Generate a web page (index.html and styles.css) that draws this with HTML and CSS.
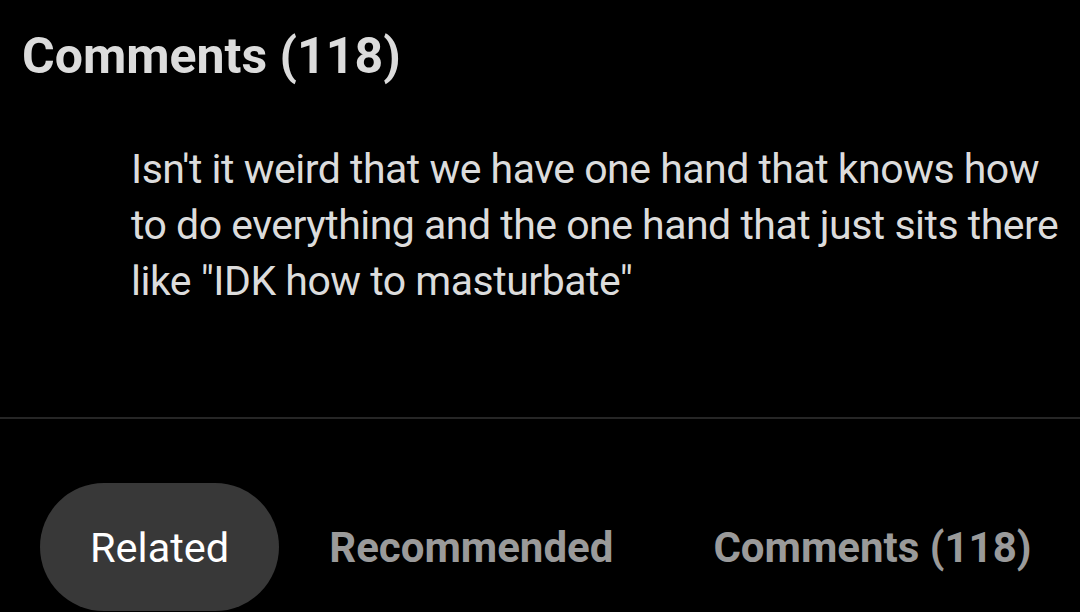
FILE: index.html
```html
<!DOCTYPE html>
<html lang="en">

<head>
    <meta charset="UTF-8">
    <meta name="viewport" content="width=device-width, initial-scale=1.0">
    <title>Comments</title>
    <link rel="stylesheet" href="styles.css">
</head>

<body>

    <h1 class="comments-title">Comments (118)</h1>

    <div class="comment">
        <p class="comment-text">Isn't it weird that we have one hand that knows how to do everything and the one hand that just sits there like "IDK how to masturbate"</p>
    </div>

    <!-- Bottom tabs -->
    <nav class="tabs">
        <div class="tab active">Related</div>
        <div class="tab">Recommended</div>
        <div class="tab">Comments (118)</div>
    </nav>

</body>

</html>
```

FILE: styles.css
```css
/* Global Styles */
body {
    font-family: Roboto, 'Noto Sans', sans-serif;
    background-color: #000;
    color: #dcdcdc;
    margin: 0;
    padding: 0;
    height: 612px;
    overflow: hidden;
}

.comments-title {
    font-size: 50px;
    font-weight: 700;
    line-height: 60px;
    margin: 0;
    padding: 26px 0 0 22px;
    color: #dcdcdc;
}

/* Comment */
.comment {
    margin-top: 55px;
    padding: 0 10px 108px 131px;
    border-bottom: 2px solid #262626;
}

.comment-text {
    margin: 0;
    font-size: 41px;
    letter-spacing: -0.5px;
    line-height: 56px;
    color: #dcdcdc;
}

/* Tabs */
.tabs {
    display: flex;
    margin: 64px 0 0 40px;
}

.tab {
    flex-shrink: 0;
    height: 128px;
    display: flex;
    align-items: center;
    padding: 0 50px;
    font-size: 42px;
    font-weight: 700;
    white-space: nowrap;
    color: #9a9a9a;
    border-radius: 64px;
}

.tab.active {
    background-color: #383838;
    color: #fff;
    font-size: 41.5px;
    font-weight: 400;
}
```
